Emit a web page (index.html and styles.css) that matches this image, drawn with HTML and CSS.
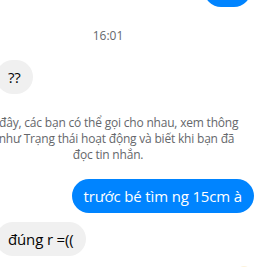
FILE: index.html
```html
<!DOCTYPE html>
<html lang="vi">
<head>
    <meta charset="UTF-8">
    <meta name="viewport" content="width=device-width, initial-scale=1.0">
    <title>Messenger</title>
    <link rel="stylesheet" href="styles.css">
</head>
<body>
    <div class="thread">
        <!-- previous outgoing message, cut off by the top edge -->
        <div class="row row-out">
            <div class="bubble bubble-out bubble-top">&nbsp;</div>
        </div>

        <div class="timestamp">16:01</div>

        <div class="row row-in row-first">
            <div class="bubble bubble-in">??</div>
        </div>

        <div class="notice">
            Giờ đây, các bạn có thể gọi cho nhau, xem thông<br>
            tin như Trạng thái hoạt động và biết khi bạn đã<br>
            đọc tin nhắn.
        </div>

        <div class="row row-out row-after-notice">
            <div class="bubble bubble-out">trước bé tìm ng 15cm à</div>
        </div>

        <div class="row row-in row-last">
            <div class="bubble bubble-in">đúng r =((</div>
        </div>

        <div class="seen"></div>
    </div>
</body>
</html>
```

FILE: styles.css
```css
* {
    margin: 0;
    padding: 0;
    box-sizing: border-box;
}

body {
    font-family: 'Open Sans', 'Noto Sans', sans-serif;
    background: white;
    width: 259px;
    height: 267px;
    overflow: hidden;
}

/* the window is cropped: the thread starts left of the frame */
.thread {
    display: flex;
    flex-direction: column;
    width: 292px;
    margin-left: -38px;
}

.row {
    display: flex;
}

.row-out {
    justify-content: flex-end;
}

.row-in {
    justify-content: flex-start;
    padding-left: 34px;
}

.bubble {
    height: 34px;
    padding: 0 12px;
    border-radius: 17px;
    font-size: 15px;
    line-height: 34px;
    letter-spacing: -0.15px;
    white-space: nowrap;
}

.bubble-out {
    background: #0084ff;
    color: white;
}

.bubble-in {
    background: #f0f0f0;
    color: #050505;
}

.bubble-top {
    width: 47px;
    margin-top: -27px;
    margin-right: 3px;
}

.timestamp {
    margin-top: 21px;
    text-align: center;
    font-size: 12px;
    line-height: 16px;
    color: #65676b;
}

.row-first {
    margin-top: 16px;
}

.notice {
    margin-top: 21px;
    text-align: center;
    font-size: 12px;
    line-height: 16px;
    letter-spacing: -0.2px;
    white-space: nowrap;
    color: #65676b;
}

.row-after-notice {
    margin-top: 16px;
}

.row-last {
    margin-top: 9px;
}

.seen {
    align-self: flex-end;
    width: 14px;
    height: 14px;
    margin-top: 10px;
    margin-right: 3px;
    border-radius: 50%;
    background: #fdf3dc;
}
```
